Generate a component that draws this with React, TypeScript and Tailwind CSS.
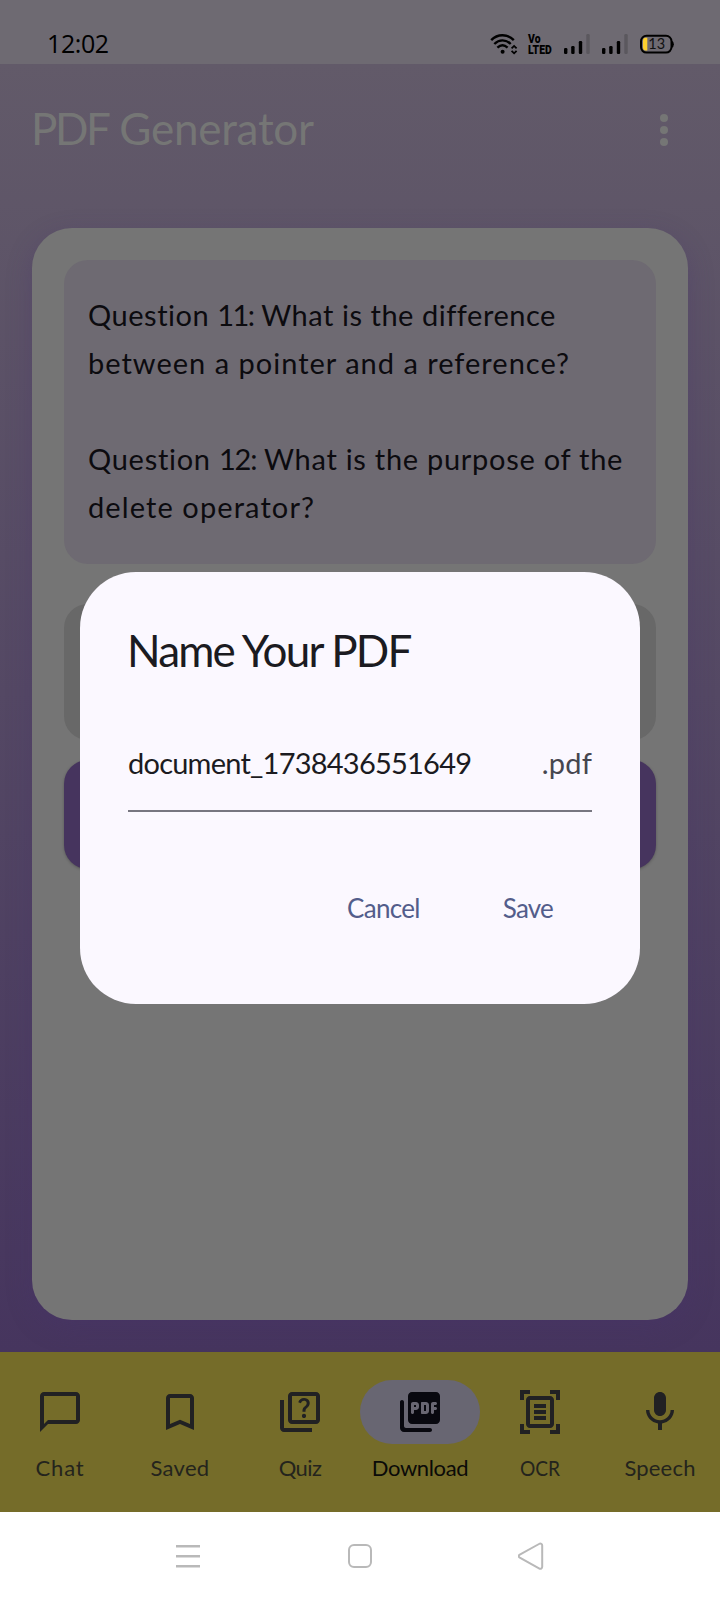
import type { ReactNode } from "react";
import { MdBookmarkBorder, MdChatBubbleOutline, MdOutlineDocumentScanner, MdOutlineQuiz } from "react-icons/md";

function WifiIcon() {
  return (
    <svg width="28" height="24" viewBox="0 0 28 24" fill="none" stroke="#000" strokeWidth="2.4">
      <path d="M1.2 8.2C7.5 1.6 17.5 1.6 23.8 8.2" />
      <path d="M4.3 12C9.3 7.2 15.7 7.2 20.7 12" />
      <path d="M7.4 15.6c3.2-3 7-3 10.2 0" />
      <circle cx="12.6" cy="19.8" r="2" fill="#000" stroke="none" />
      <path d="M21.6 16.4l2.5-2.5 2.5 2.5M21.6 18.8l2.5 2.5 2.5-2.5" strokeWidth="1.8" />
    </svg>
  );
}

function VolteIcon() {
  return (
    <div className="h-6 w-6 pt-[2px] font-['Roboto',sans-serif] text-[12.5px] leading-[10.5px] font-black text-black">
      <p className="w-[30px] origin-left scale-x-[0.83] whitespace-nowrap">
        Vo
        <br />
        LTED
      </p>
    </div>
  );
}

function SignalIcon() {
  return (
    <svg width="26" height="24" viewBox="0 0 26 24">
      <rect x="0" y="16" width="3.4" height="6" rx="1.2" />
      <rect x="7.2" y="14" width="3.4" height="8" rx="1.2" />
      <rect x="14.8" y="9" width="3.4" height="13" rx="1.2" />
      <rect x="22.3" y="2" width="3.4" height="20" rx="1.2" fill="#5b585e" />
    </svg>
  );
}

function BatteryIcon() {
  return (
    <svg width="34" height="24" viewBox="0 0 34 24">
      <rect x="1" y="3.8" width="30.5" height="16.8" rx="5.5" fill="none" stroke="#000" strokeWidth="2" />
      <path d="M31.5 8.5q2.4 1 2.4 3.7t-2.4 3.7z" />
      <path d="M7.3 5.8v12.8H5.6q-2.6 0-2.6-3V8.8q0-3 2.6-3z" fill="#fdd02f" />
      <text x="8.3" y="17.4" fontSize="14.5" fontFamily="Lato, sans-serif" fill="#111">13</text>
    </svg>
  );
}

function PdfIcon() {
  return (
    <svg width="48" height="48" viewBox="0 0 24 24" fill="#08080f">
      <path d="M20 2H8c-1.1 0-2 .9-2 2v12c0 1.1.9 2 2 2h12c1.1 0 2-.9 2-2V4c0-1.1-.9-2-2-2zm-8.500 7.500c0 .83-.67 1.500-1.500 1.500H9v1.250c0 .41-.34.75-.75.75s-.75-.34-.75-.75V8c0-.55.45-1 1-1H10c.83 0 1.500.67 1.500 1.500v1zm5 2c0 .83-.67 1.500-1.500 1.500h-2c-.28 0-.5-.22-.5-.5v-5c0-.28.22-.5.5-.5h2c.83 0 1.500.67 1.500 1.500v3zm4-3.750c0 .41-.34.75-.75.75H19v1h.75c.41 0 .75.34.75.75s-.34.75-.75.75H19v1.250c0 .41-.34.75-.75.75s-.75-.34-.75-.75V8c0-.55.45-1 1-1h1.250c.41 0 .75.34.75.75zM9 9.500h1v-1H9v1zM3 6c-.55 0-1 .45-1 1v13c0 1.100.9 2 2 2h13c.55 0 1-.45 1-1s-.45-1-1-1H5c-.55 0-1-.45-1-1V7c0-.55-.45-1-1-1zm11 5.500h1v-3h-1v3z" />
    </svg>
  );
}

function MicIcon() {
  return (
    <svg width="48" height="48" viewBox="0 0 24 24" fill="currentColor">
      <path d="M12 14c1.660 0 3-1.340 3-3V5c0-1.660-1.340-3-3-3S9 3.340 9 5v6c0 1.660 1.340 3 3 3zm5.300-3c0 3-2.540 5.100-5.300 5.100S6.700 14 6.700 11H5c0 3.410 2.720 6.230 6 6.720V21h2v-3.280c3.280-.49 6-3.310 6-6.720h-1.700z" />
    </svg>
  );
}

function Tab({ label, icon, active = false, fit = "" }: { label: string; icon: ReactNode; active?: boolean; fit?: string }) {
  return (
    <div className="flex w-[120px] flex-col items-center pt-7 text-[#212123]">
      <div className={`flex h-16 w-full items-center justify-center rounded-full ${active ? "bg-[#686672]" : ""}`}>{icon}</div>
      <span className={`mt-2 text-[22px] leading-8 whitespace-nowrap ${active ? "text-[#0a0a08]" : "text-[#24241d]"} ${fit}`}>{label}</span>
    </div>
  );
}

export default function App() {
  return (
    <div className="relative flex h-[1600px] w-[720px] flex-col overflow-hidden font-['Lato',sans-serif]">
      <header className="flex h-16 shrink-0 items-center justify-between bg-[#6e6a72] pr-[46px] pl-[47px]">
        <span className="pt-[22px] font-['Open_Sans',sans-serif] text-[25px] leading-[42px] tracking-[-0.4px] text-black">12:02</span>
        <div className="flex items-center gap-3 pt-6">
          <div className="flex gap-[10px]">
            <WifiIcon />
            <VolteIcon />
          </div>
          <SignalIcon />
          <SignalIcon />
          <BatteryIcon />
        </div>
      </header>

      <main className="flex flex-1 flex-col bg-linear-to-b from-[#625a69] to-[#46355e] px-8 pb-8">
        <div className="flex h-[164px] shrink-0 items-start justify-between">
          <h1 className="-ml-px text-[44px] leading-[128px] font-normal tracking-[-0.25px] text-[#757675]">
            <span className="tracking-[-2.5px]">PDF</span> Generator
          </h1>
          <svg className="mt-12 mr-4" width="16" height="36" viewBox="0 0 16 36" fill="#757675">
            <circle cx="8" cy="6" r="4" />
            <circle cx="8" cy="18" r="4" />
            <circle cx="8" cy="30" r="4" />
          </svg>
        </div>

        <section className="flex flex-1 flex-col rounded-[40px] bg-[#757575] p-8 shadow-[0_8px_26px_rgba(70,50,108,0.32)]">
          <div className="h-[304px] rounded-3xl bg-[#6e6a72] px-6 pt-[31px] text-[29px] leading-[48px] whitespace-nowrap text-[#0c0b0f]">
            <p className="tracking-[0.53px]">
              Question <span className="tracking-[-1.5px]">11:</span> What is the difference
            </p>
            <p className="tracking-[1px]">between a pointer and a reference?</p>
            <p className="mt-12 tracking-[0.72px]">
              Question <span className="tracking-[-1.2px]">12:</span> What is the purpose of the
            </p>
            <p className="tracking-[1.1px]">delete operator?</p>
          </div>
          <div className="mt-10 h-[136px] rounded-3xl bg-[#686868]" />
          <div className="mt-5 h-[109px] rounded-3xl bg-[#46345e] shadow-[0_1px_3px_rgba(0,0,0,0.25)]" />
        </section>
      </main>

      <nav className="flex h-40 shrink-0 bg-[#756c29]">
        <Tab label="Chat" fit="tracking-[0.9px]" icon={<MdChatBubbleOutline size={48} />} />
        <Tab label="Saved" fit="tracking-[0.3px]" icon={<MdBookmarkBorder size={48} />} />
        <Tab label="Quiz" fit="tracking-[-0.6px]" icon={<MdOutlineQuiz size={48} />} />
        <Tab label="Download" active fit="tracking-[-0.35px]" icon={<PdfIcon />} />
        <Tab label="OCR" fit="scale-x-[0.87]" icon={<MdOutlineDocumentScanner size={48} />} />
        <Tab label="Speech" fit="tracking-[0.2px]" icon={<MicIcon />} />
      </nav>

      <footer className="flex h-[88px] shrink-0 items-center justify-center gap-36 bg-white">
        <svg width="28" height="28" viewBox="0 0 28 28" stroke="#b9b9b9" strokeWidth="2.400">
          <path d="M2 4.300h24M2 14.300h24M2 24.300h24" />
        </svg>
        <svg width="28" height="28" viewBox="0 0 28 28" fill="none" stroke="#b9b9b9" strokeWidth="2">
          <rect x="3" y="3" width="22" height="22" rx="5" />
        </svg>
        <svg width="28" height="28" viewBox="0 0 28 28" fill="none" stroke="#b9b9b9" strokeWidth="2">
          <path d="M1.800 12.700L21 2c1.800-1 3.200 0 3.200 1.600v21.200c0 1.600-1.400 2.600-3.200 1.600L1.800 15.700c-1.400-.9-1.400-2.200 0-3z" />
        </svg>
      </footer>

      <div className="absolute inset-x-20 top-[572px] flex h-[432px] flex-col rounded-[56px] bg-[#fbf8ff] px-12 pt-[50px]" role="dialog">
        <h2 className="-ml-px text-[44px] leading-[56px] font-normal tracking-[-1.8px] text-[#1b1b21]">Name Your PDF</h2>
        <div className="mt-11 flex h-[90px] items-center justify-between border-b-2 border-[#777680] pb-[6px] text-[29px] leading-10 text-[#1b1b21]">
          <span className="tracking-[-0.770px]">document_1738436551649</span>
          <span className="tracking-[0.2px] text-[#46464f]">.pdf</span>
        </div>
        <div className="mt-14 flex h-20 items-center justify-end gap-1 pr-px text-[26px] text-[#535d8b]">
          <button className="h-full pr-[39px] pl-10 tracking-[-0.660px]">Cancel</button>
          <button className="h-full pr-[38px] pl-10 tracking-[-0.8px]">Save</button>
        </div>
      </div>
    </div>
  );
}
